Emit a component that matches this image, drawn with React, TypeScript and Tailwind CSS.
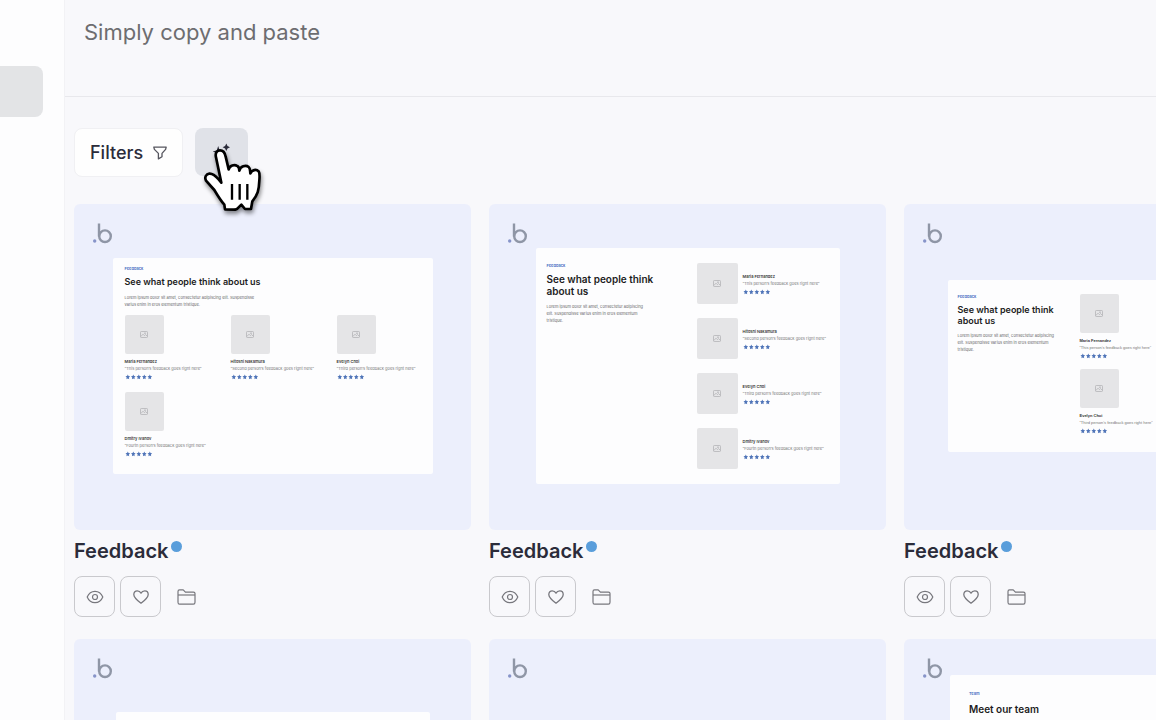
import { ReactNode } from "react";

const LOREM =
  "Lorem ipsum dolor sit amet, consectetur adipiscing elit. Suspendisse varius enim in eros elementum tristique.";

const people = [
  { name: "Maria Fernandez", quote: "“This person’s feedback goes right here”" },
  { name: "Hitoshi Nakamura", quote: "“Second person’s feedback goes right here”" },
  { name: "Evelyn Choi", quote: "“Third person’s feedback goes right here”" },
  { name: "Dmitry Ivanov", quote: "“Fourth person’s feedback goes right here”" },
];

const Logo = () => (
  <svg className="absolute top-[19px] left-[19px] h-[21px] w-[19px]" viewBox="0 0 19 21" fill="none" aria-hidden="true">
    <circle cx="1.7" cy="18" r="1.7" fill="#8794c9" />
    <path d="M6 0.5V13.5" stroke="#8f96a6" strokeWidth="2.4" />
    <circle cx="12" cy="13.2" r="5.8" stroke="#8f96a6" strokeWidth="2.4" />
  </svg>
);

const Photo = () => (
  <div className="flex aspect-square w-full items-center justify-center rounded-xs bg-[#e5e5e7]">
    <svg className="h-[7px] w-2" viewBox="0 0 8 7" fill="none" stroke="#b4b4b8" strokeWidth="0.8" aria-hidden="true">
      <rect x="0.5" y="0.5" width="7" height="6" rx="0.8" />
      <path d="M0.8 5.6L3 3.2L4.4 4.6L5.6 3.6L7.4 5.4" />
      <circle cx="5" cy="2.2" r="0.5" />
    </svg>
  </div>
);

const Stars = () => (
  <svg className="mt-0.5 h-1.5 w-7" viewBox="0 0 28 6" fill="#4f74b8" aria-hidden="true">
    {[0, 1, 2, 3, 4].map((i) => (
      <path
        key={i}
        transform={`translate(${i * 5.5} 0)`}
        d="M2.8 0.5L3.5 2.1L5.1 2.3L3.9 3.6L4.2 5.3L2.8 4.4L1.4 5.3L1.7 3.6L0.5 2.3L2.1 2.1Z"
      />
    ))}
  </svg>
);

const Person = ({ name, quote }: { name: string; quote: string }) => (
  <div className="whitespace-nowrap">
    <p className="text-[4px] leading-[7px] font-semibold text-[#333]">{name}</p>
    <p className="text-[4px] leading-[7px] text-[#777]">{quote}</p>
    <Stars />
  </div>
);

const GridPreview = () => (
  <div className="w-[320px] rounded-xs bg-[#fdfdfe] px-3 pt-2 pb-[17px]">
    <p className="text-[4px] leading-[6px] font-semibold text-[#3f6cc0]">Feedback</p>
    <h3 className="mt-1 text-[9px] leading-3 font-semibold text-[#1c1c22]">See what people think about us</h3>
    <p className="mt-1.5 w-[136px] text-[4px] leading-[7px] text-[#666]">{LOREM}</p>
    <div className="mt-[7px] grid grid-cols-3 gap-x-[22px] gap-y-3">
      {people.map((p) => (
        <div key={p.name} className="min-w-0">
          <div className="mb-1 w-[39px]">
            <Photo />
          </div>
          <Person {...p} />
        </div>
      ))}
    </div>
  </div>
);

const ListPreview = () => (
  <div className="flex w-[304px] gap-[38px] rounded-xs bg-[#fdfdfe] px-[11px] py-[15px]">
    <div className="w-[112px] shrink-0">
      <p className="text-[4px] leading-[6px] font-semibold text-[#3f6cc0]">Feedback</p>
      <h3 className="mt-1 text-[10px] leading-3 font-semibold text-[#1c1c22]">See what people think about us</h3>
      <p className="mt-1.5 w-[103px] text-[4px] leading-[7px] text-[#666]">{LOREM}</p>
    </div>
    <div className="flex flex-col gap-3.5">
      {people.map((p) => (
        <div key={p.name} className="flex items-center gap-[5px]">
          <div className="w-[41px]">
            <Photo />
          </div>
          <Person {...p} />
        </div>
      ))}
    </div>
  </div>
);

const SplitPreview = () => (
  <div className="flex w-[310px] gap-[22px] rounded-xs bg-[#fdfdfe] px-2.5 pt-3.5 pb-[18px] font-['Liberation_Sans',sans-serif]">
    <div className="w-[100px] shrink-0 font-[Inter,sans-serif]">
      <p className="text-[4px] leading-[6px] font-semibold text-[#3f6cc0]">Feedback</p>
      <h3 className="mt-1 text-[9px] leading-[11px] font-semibold text-[#1c1c22]">See what people think about us</h3>
      <p className="mt-1.5 text-[4px] leading-[7px] text-[#666]">{LOREM}</p>
    </div>
    <div className="grid grow grid-cols-2 gap-x-2 gap-y-2.5">
      {people.map((p) => (
        <div key={p.name} className="min-w-0">
          <div className="mb-1 w-[39px]">
            <Photo />
          </div>
          <Person {...p} />
        </div>
      ))}
    </div>
  </div>
);

const EmptyPreview = () => <div className="h-[178px] w-[314px] rounded-xs bg-[#fdfdfe]" />;

const TeamPreview = () => (
  <div className="h-[252px] w-[305px] rounded-xs bg-[#fdfdfe] px-[19px] py-4">
    <p className="text-[4px] leading-[6px] font-semibold text-[#3f6cc0]">Team</p>
    <h3 className="mt-1.5 text-[10px] leading-3 font-semibold text-[#1c1c22]">Meet our team</h3>
  </div>
);

const EyeIcon = () => (
  <svg className="size-[18px]" viewBox="0 0 18 18" fill="none" stroke="currentColor" strokeWidth="1.2" aria-hidden="true">
    <path d="M1.2 9C2.8 5.2 5.6 3.3 9 3.3S15.2 5.2 16.8 9C15.2 12.8 12.4 14.7 9 14.7S2.8 12.8 1.2 9Z" />
    <circle cx="9" cy="9" r="2.5" />
  </svg>
);

const HeartIcon = () => (
  <svg className="size-[18px]" viewBox="0 0 18 18" fill="none" stroke="currentColor" strokeWidth="1.3" strokeLinejoin="round" aria-hidden="true">
    <path d="M9 15.2C5 12.2 1.8 9.5 1.8 6.4C1.8 4.2 3.4 2.8 5.2 2.8C6.9 2.8 8.2 3.6 9 5.1C9.8 3.6 11.1 2.8 12.8 2.8C14.6 2.8 16.2 4.2 16.2 6.4C16.2 9.5 13 12.2 9 15.2Z" />
  </svg>
);

const FolderIcon = () => (
  <svg className="h-4 w-[19px]" viewBox="0 0 19 16" fill="none" stroke="currentColor" strokeWidth="1.2" strokeLinejoin="round" aria-hidden="true">
    <path d="M1 13.2V2.4C1 1.3 1.5 0.8 2.5 0.8H6.2L8.4 3.1H16.5C17.5 3.1 18 3.6 18 4.6V13.2C18 14.5 17.5 15.1 16.4 15.1H2.6C1.5 15.1 1 14.5 1 13.2Z" />
    <path d="M1 6H18" />
  </svg>
);

const HandCursor = () => (
  <svg
    className="pointer-events-none absolute top-[19px] left-[7px] z-10 h-[68px] w-[60px] overflow-visible drop-shadow-[1px_3px_2px_rgba(0,0,0,0.45)]"
    viewBox="399 111 180 204"
    fill="none"
    aria-hidden="true"
  >
    <path
      d="M468 298L466 284C455 272 445 255 436 240L411 212C406 202 411 192 421 191C432 190 440 198 449 208L457 218L441 142C438 130 443 121 453 121C463 121 468 129 470 140L479 178C482 166 496 162 505 168C510 171 511 176 511 182C514 169 530 164 539 171C544 175 543 182 544 190C549 179 562 177 569 184C573 190 572 200 571 212C570 240 566 255 550 274L546 297L528 297L517 284L505 296L498 299Z"
      fill="#fff"
      stroke="#000"
      strokeWidth="8"
      strokeLinejoin="round"
    />
    <path d="M489 222V269M512 222V269M535 222V269" stroke="#000" strokeWidth="7" />
  </svg>
);

const Card = ({ title, children }: { title: string; children?: ReactNode }) => (
  <article>
    <div className="relative flex h-[326px] items-center justify-center rounded-md bg-[#eceffc] pb-0.5">
      <Logo />
      {children}
    </div>
    <div className="mt-[9px] flex items-start gap-[3px]">
      <h2 className="text-xl leading-6 font-semibold text-[#2b2c3a]">{title}</h2>
      <span className="mt-0.5 size-[11px] rounded-full bg-[#5a9edb]" />
    </div>
    <div className="mt-[13px] flex gap-[5px] text-[#77777d]">
      <button aria-label="Preview" className="flex size-[41px] items-center justify-center rounded-lg border border-[#c9c9cd]">
        <EyeIcon />
      </button>
      <button aria-label="Like" className="flex size-[41px] items-center justify-center rounded-lg border border-[#c9c9cd]">
        <HeartIcon />
      </button>
      <button aria-label="Add to folder" className="flex size-[41px] items-center justify-center">
        <FolderIcon />
      </button>
    </div>
  </article>
);

const App = () => {
  return (
    <div className="flex h-screen overflow-hidden bg-[#f8f8fb] font-[Inter,'Liberation_Sans',sans-serif]">
      <aside className="w-16 shrink-0 bg-[#fdfdfe] pt-[66px]">
        <div className="mr-[21px] h-[51px] rounded-r-lg bg-[#e3e4e6]" />
      </aside>

      <main className="min-w-0 grow overflow-hidden border-l border-[#f2f2f5]">
        <header className="h-[97px] border-b border-[#e8e8ec] px-[19px] pt-4">
          <p className="text-[22px] leading-8 text-[#6d6d70]">Simply copy and paste</p>
        </header>

        <div className="pt-[31px] pl-[9px]">
          <div className="flex gap-3">
            <button className="flex h-[49px] items-center gap-2.5 rounded-lg border border-[#f0f0f3] bg-[#fefefe] px-[15px] text-lg font-medium text-[#2b2c3a]">
              Filters
              <svg className="size-3.5" viewBox="0 0 14 14" fill="none" stroke="#55555e" strokeWidth="1.3" strokeLinejoin="round" aria-hidden="true">
                <path d="M0.8 1.2H13.2L12.6 3.4L9 7.4V10.8L5.4 12.9V7.4L1.4 3.4Z" />
              </svg>
            </button>
            <div className="relative">
              <button aria-label="Generate with AI" className="flex h-12 w-[53px] items-center justify-center rounded-lg bg-[#e0e2e8]">
                <svg className="size-[18px]" viewBox="0 0 18 18" fill="#2b2c3a" aria-hidden="true">
                  <path d="M5.2 3L6.6 7.2L10.8 8.6L6.6 10L5.2 14.2L3.8 10L-0.4 8.6L3.8 7.2Z" />
                  <path d="M13.3 0.6L14.5 3.1L17 4.3L14.5 5.5L13.3 8L12.1 5.5L9.6 4.3L12.1 3.1Z" />
                </svg>
              </button>
              <HandCursor />
            </div>
          </div>

          <div className="mt-[27px] grid grid-cols-[repeat(3,397px)] gap-x-[18px] gap-y-[22px]">
            <Card title="Feedback">
              <GridPreview />
            </Card>
            <Card title="Feedback">
              <ListPreview />
            </Card>
            <Card title="Feedback">
              <SplitPreview />
            </Card>
            <Card title="Team">
              <EmptyPreview />
            </Card>
            <Card title="Team" />
            <Card title="Team">
              <TeamPreview />
            </Card>
          </div>
        </div>
      </main>
    </div>
  );
};

export default App;
